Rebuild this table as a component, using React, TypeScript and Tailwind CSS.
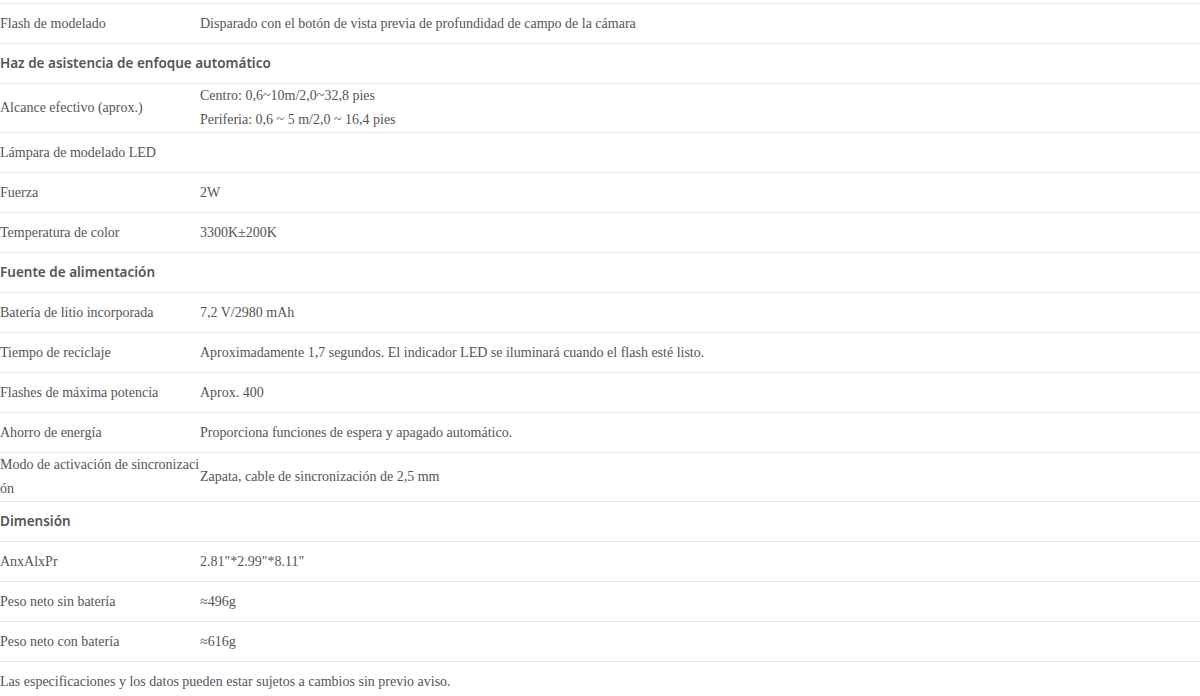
import React from 'react';

type Row =
  | { kind: 'head'; title: string }
  | { kind: 'spec'; label: string; value?: string[] };

const rows: Row[] = [
  { kind: 'spec', label: 'Flash de modelado', value: ['Disparado con el botón de vista previa de profundidad de campo de la cámara'] },
  { kind: 'head', title: 'Haz de asistencia de enfoque automático' },
  { kind: 'spec', label: 'Alcance efectivo (aprox.)', value: ['Centro: 0,6~10m/2,0~32,8 pies', 'Periferia: 0,6 ~ 5 m/2,0 ~ 16,4 pies'] },
  { kind: 'spec', label: 'Lámpara de modelado LED' },
  { kind: 'spec', label: 'Fuerza', value: ['2W'] },
  { kind: 'spec', label: 'Temperatura de color', value: ['3300K±200K'] },
  { kind: 'head', title: 'Fuente de alimentación' },
  { kind: 'spec', label: 'Batería de litio incorporada', value: ['7,2 V/2980 mAh'] },
  { kind: 'spec', label: 'Tiempo de reciclaje', value: ['Aproximadamente 1,7 segundos. El indicador LED se iluminará cuando el flash esté listo.'] },
  { kind: 'spec', label: 'Flashes de máxima potencia', value: ['Aprox. 400'] },
  { kind: 'spec', label: 'Ahorro de energía', value: ['Proporciona funciones de espera y apagado automático.'] },
  { kind: 'spec', label: 'Modo de activación de sincronización', value: ['Zapata, cable de sincronización de 2,5 mm'] },
  { kind: 'head', title: 'Dimensión' },
  { kind: 'spec', label: 'AnxAlxPr', value: ['2.81"*2.99"*8.11"'] },
  { kind: 'spec', label: 'Peso neto sin batería', value: ['≈496g'] },
  { kind: 'spec', label: 'Peso neto con batería', value: ['≈616g'] },
];

export default function App() {
  return (
    <div className="w-[1200px] bg-white pt-[3px] text-[14px] text-[#555] font-['Liberation_Serif',serif]">
      <div className="border-t border-[#e6e6e6]">
        {rows.map((row, i) =>
          row.kind === 'head' ? (
            <div key={i} className="flex min-h-[40px] items-center border-b border-[#e6e6e6] font-['Noto_Sans',sans-serif] text-[13.5px] font-semibold text-[#555]">
              {row.title}
            </div>
          ) : (
            <div key={i} className="flex min-h-[40px] items-center border-b border-[#e6e6e6] leading-[24px]">
              <div className="w-[200px] shrink-0 break-all">{row.label}</div>
              <div className="flex-1">
                {row.value?.map((v, j) => (
                  <div key={j}>{v}</div>
                ))}
              </div>
            </div>
          )
        )}
      </div>
      <p className="flex h-[39px] items-center">Las especificaciones y los datos pueden estar sujetos a cambios sin previo aviso.</p>
    </div>
  );
}
